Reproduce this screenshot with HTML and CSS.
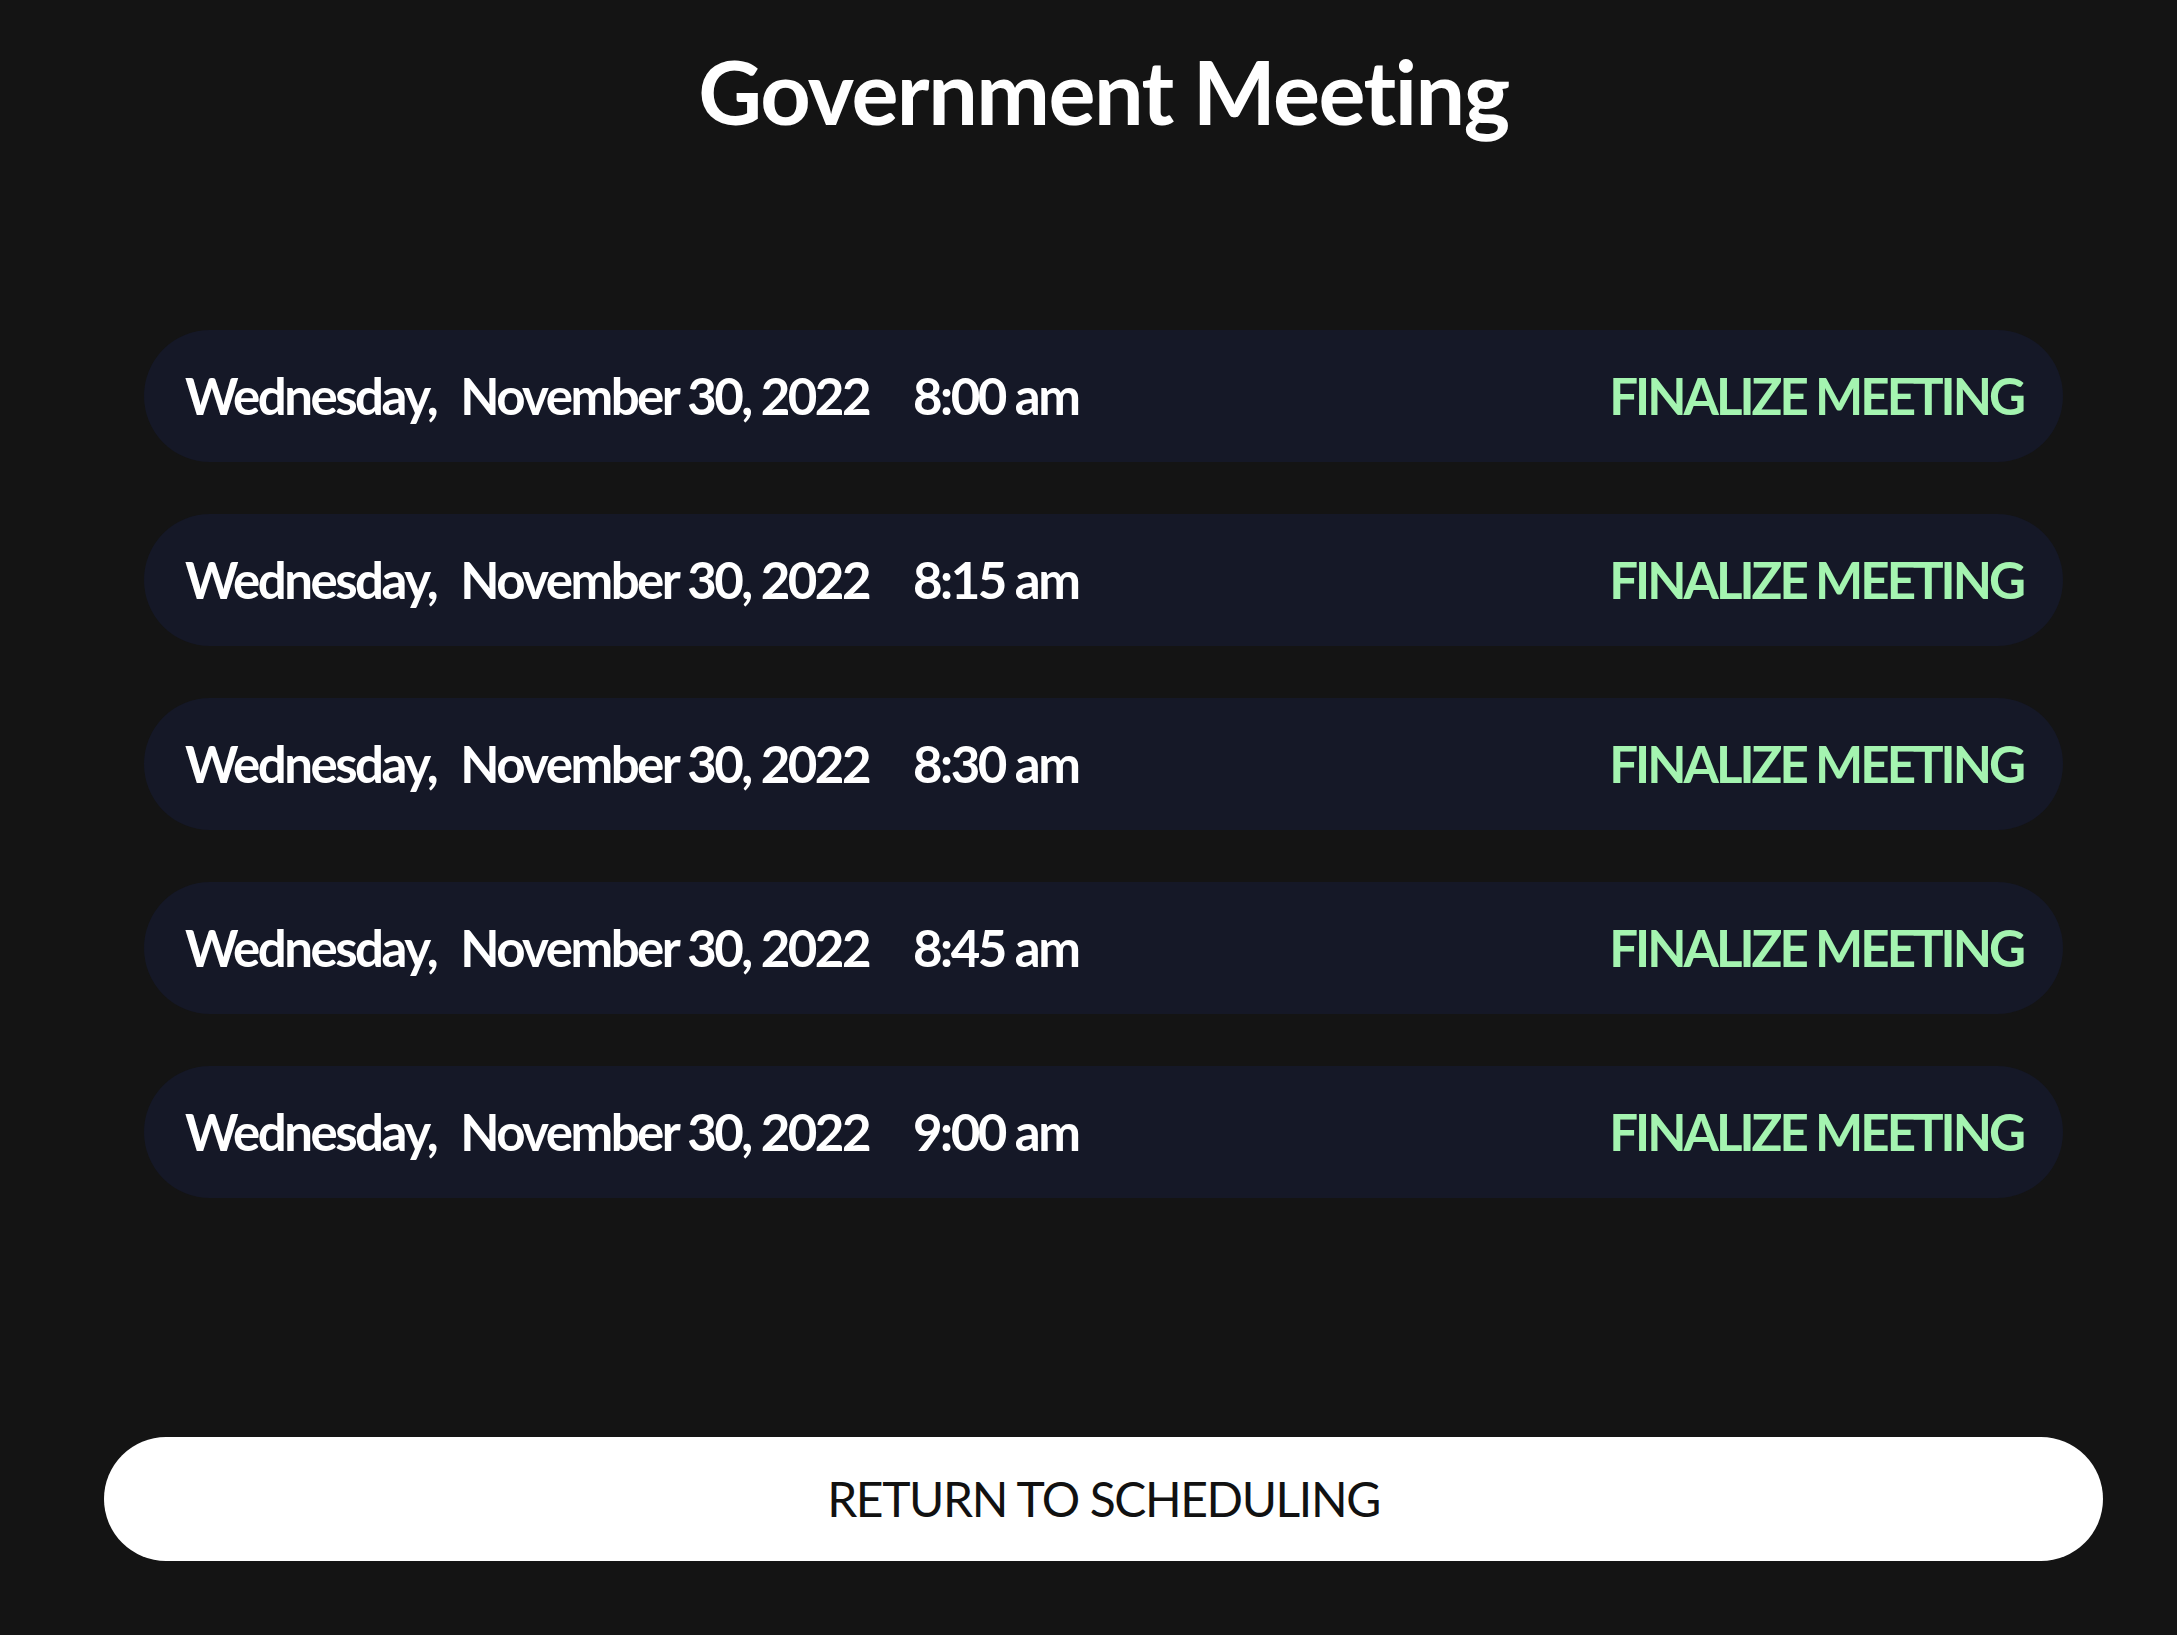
FILE: index.html
```html
<!DOCTYPE html>
<html lang="en">
<head>
<meta charset="utf-8">
<title>Government Meeting</title>
<link rel="stylesheet" href="styles.css">
</head>
<body>
<main class="page">
  <h1 class="title">Government Meeting</h1>
  <ul class="slots">
    <li class="slot"><span class="when"><span class="day">Wednesday,</span><span class="date">November 30, 2022</span><span class="time">8:00 am</span></span><span class="finalize">FINALIZE MEETING</span></li>
    <li class="slot"><span class="when"><span class="day">Wednesday,</span><span class="date">November 30, 2022</span><span class="time">8:15 am</span></span><span class="finalize">FINALIZE MEETING</span></li>
    <li class="slot"><span class="when"><span class="day">Wednesday,</span><span class="date">November 30, 2022</span><span class="time">8:30 am</span></span><span class="finalize">FINALIZE MEETING</span></li>
    <li class="slot"><span class="when"><span class="day">Wednesday,</span><span class="date">November 30, 2022</span><span class="time">8:45 am</span></span><span class="finalize">FINALIZE MEETING</span></li>
    <li class="slot"><span class="when"><span class="day">Wednesday,</span><span class="date">November 30, 2022</span><span class="time">9:00 am</span></span><span class="finalize">FINALIZE MEETING</span></li>
  </ul>
  <div class="footer">
    <button class="return">RETURN TO SCHEDULING</button>
  </div>
</main>
</body>
</html>
```

FILE: styles.css
```css
html, body {
  margin: 0;
  padding: 0;
  background: #141414;
}
body {
  font-family: Lato, "Liberation Sans", sans-serif;
  color: #ffffff;
  min-height: 1635px;
}
.page {
  display: flex;
  flex-direction: column;
  padding: 39px 0 0 0;
}
.title {
  margin: 0;
  padding-left: 30px;
  text-align: center;
  font-size: 88px;
  font-weight: 700;
  line-height: 1.2;
  letter-spacing: -1.5px;
}
.slots {
  list-style: none;
  margin: 185px 0 0 0;
  padding: 0 114px 0 144px;
  display: flex;
  flex-direction: column;
  gap: 52px;
}
.slot {
  height: 132px;
  border-radius: 66px;
  background: #151827;
  display: flex;
  align-items: center;
  justify-content: space-between;
  padding: 0 40px 0 41px;
  font-size: 51px;
  font-weight: 700;
  letter-spacing: -2.5px;
}
.when {
  display: flex;
  align-items: baseline;
}
.day { margin-right: 24px; }
.date { margin-right: 44px; }
.finalize {
  color: #a4f4b0;
  letter-spacing: -3px;
}
.footer {
  padding: 0 74px 0 104px;
  margin-top: 239px;
}
.return {
  display: block;
  width: 100%;
  height: 124px;
  border: none;
  border-radius: 62px;
  background: #ffffff;
  color: #111111;
  font-family: Lato, "Liberation Sans", sans-serif;
  font-size: 48px;
  font-weight: 400;
  letter-spacing: -1.4px;
  cursor: pointer;
}
```
